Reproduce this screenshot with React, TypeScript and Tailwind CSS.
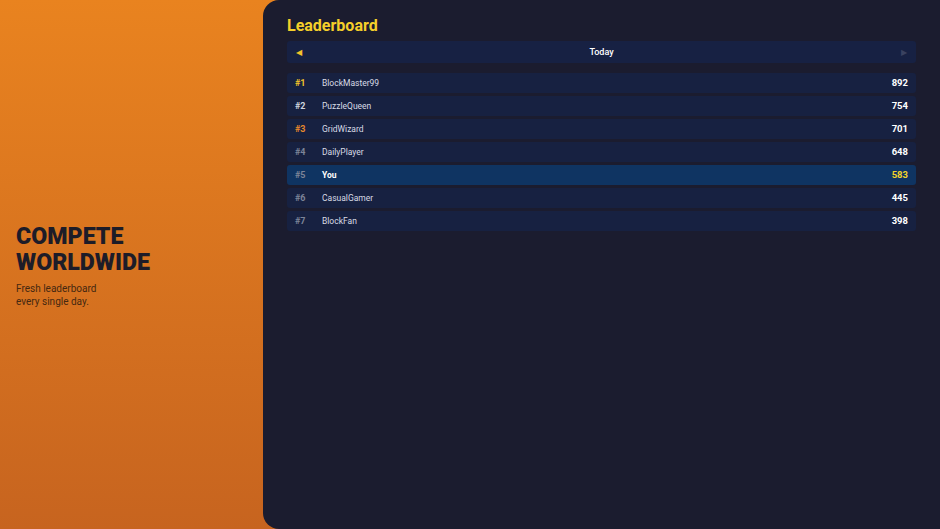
const rows = [
  { rank: 1, name: 'BlockMaster99', score: 892, rankColor: 'text-[#f2c22a]' },
  { rank: 2, name: 'PuzzleQueen', score: 754, rankColor: 'text-[#cfd4de]' },
  { rank: 3, name: 'GridWizard', score: 701, rankColor: 'text-[#e8872c]' },
  { rank: 4, name: 'DailyPlayer', score: 648, rankColor: 'text-[#7c8498]' },
  { rank: 5, name: 'You', score: 583, rankColor: 'text-[#7c8498]', me: true },
  { rank: 6, name: 'CasualGamer', score: 445, rankColor: 'text-[#7c8498]' },
  { rank: 7, name: 'BlockFan', score: 398, rankColor: 'text-[#7c8498]' },
];

export default function App() {
  return (
    <div
      className="w-[940px] h-[529px] flex bg-gradient-to-b from-[#e9831f] to-[#c7641f] overflow-hidden"
      style={{ fontFamily: 'Roboto, "Liberation Sans", sans-serif' }}
    >
      {/* promo side */}
      <div className="w-[263px] shrink-0 flex flex-col justify-center pl-4 pt-[2px]">
        <h1 className="text-[23.2px] font-black leading-[26px] text-[#1d1c28]">
          COMPETE
          <br />
          WORLDWIDE
        </h1>
        <p className="mt-[8px] text-[10px] leading-[12.5px] text-[#452811]">
          Fresh leaderboard
          <br />
          every single day.
        </p>
      </div>

      {/* leaderboard panel */}
      <div className="flex-1 bg-[#1b1c2f] rounded-l-[16px] px-6 pt-[15px]">
        <h2 className="text-[16px] font-bold leading-[22px] text-[#f5cf2a]">Leaderboard</h2>

        <div className="mt-[4px] h-[22px] rounded-[3px] bg-[#172143] flex items-center justify-between px-[9px] pt-[2px]">
          <span className="text-[8px] text-[#f2c22a]">◀</span>
          <span className="text-[9px] font-medium text-white">Today</span>
          <span className="text-[8px] text-[#3a4260]">▶</span>
        </div>

        <div className="mt-[10px] flex flex-col gap-[3px]">
          {rows.map((r) => (
            <div
              key={r.rank}
              className={`h-[20px] rounded-[3px] flex items-center px-[8px] pt-[1px] ${
                r.me ? 'bg-[#0f3462]' : 'bg-[#172141]'
              }`}
            >
              <span className={`w-[27px] text-[9px] font-bold ${r.rankColor}`}>#{r.rank}</span>
              <span
                className={`flex-1 text-[8.5px] ${r.me ? 'font-bold text-white' : 'text-[#d7dbe5]'}`}
              >
                {r.name}
              </span>
              <span
                className={`text-[9.5px] font-bold ${r.me ? 'text-[#f2d22a]' : 'text-white'}`}
              >
                {r.score}
              </span>
            </div>
          ))}
        </div>
      </div>
    </div>
  );
}
